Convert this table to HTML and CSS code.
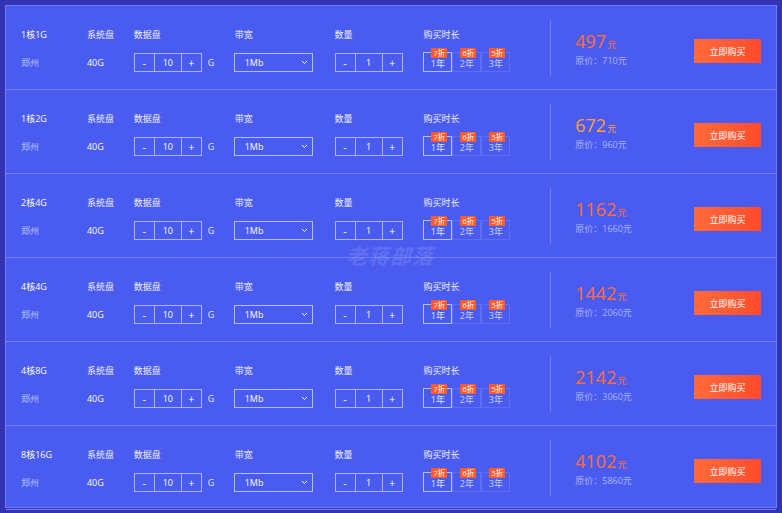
FILE: index.html
```html
<!DOCTYPE html>
<html lang="zh">
<head>
<meta charset="utf-8">
<link rel="stylesheet" href="styles.css">
</head>
<body>
<div class="panel">
  <div class="row">
    <div class="col c-name"><div class="label title">1核1G</div><div class="ctl city">郑州</div></div>
    <div class="col c-sys"><div class="label">系统盘</div><div class="ctl val">40G</div></div>
    <div class="col c-data"><div class="label">数据盘</div><div class="ctl"><div class="stepper"><span class="btn">-</span><span class="num">10</span><span class="btn">+</span></div><span class="unit">G</span></div></div>
    <div class="col c-bw"><div class="label">带宽</div><div class="ctl"><div class="select"><span>1Mb</span><svg width="7" height="5" viewBox="0 0 7 5"><path d="M1 1l2.5 2.5L6 1" fill="none" stroke="#fff" stroke-width="1"/></svg></div></div></div>
    <div class="col c-qty"><div class="label">数量</div><div class="ctl"><div class="stepper"><span class="btn">-</span><span class="num">1</span><span class="btn">+</span></div></div></div>
    <div class="col c-dur"><div class="label">购买时长</div><div class="ctl years"><div class="yr on">1年<i>7折</i></div><div class="yr">2年<i>6折</i></div><div class="yr">3年<i>5折</i></div></div></div>
    <div class="divider"></div>
    <div class="price"><div class="now">497<small>元</small></div><div class="orig">原价：710元</div></div>
    <div class="buy">立即购买</div>
  </div>
  <div class="row">
    <div class="col c-name"><div class="label title">1核2G</div><div class="ctl city">郑州</div></div>
    <div class="col c-sys"><div class="label">系统盘</div><div class="ctl val">40G</div></div>
    <div class="col c-data"><div class="label">数据盘</div><div class="ctl"><div class="stepper"><span class="btn">-</span><span class="num">10</span><span class="btn">+</span></div><span class="unit">G</span></div></div>
    <div class="col c-bw"><div class="label">带宽</div><div class="ctl"><div class="select"><span>1Mb</span><svg width="7" height="5" viewBox="0 0 7 5"><path d="M1 1l2.5 2.5L6 1" fill="none" stroke="#fff" stroke-width="1"/></svg></div></div></div>
    <div class="col c-qty"><div class="label">数量</div><div class="ctl"><div class="stepper"><span class="btn">-</span><span class="num">1</span><span class="btn">+</span></div></div></div>
    <div class="col c-dur"><div class="label">购买时长</div><div class="ctl years"><div class="yr on">1年<i>7折</i></div><div class="yr">2年<i>6折</i></div><div class="yr">3年<i>5折</i></div></div></div>
    <div class="divider"></div>
    <div class="price"><div class="now gold">672<small>元</small></div><div class="orig">原价：960元</div></div>
    <div class="buy">立即购买</div>
  </div>
  <div class="row">
    <div class="col c-name"><div class="label title">2核4G</div><div class="ctl city">郑州</div></div>
    <div class="col c-sys"><div class="label">系统盘</div><div class="ctl val">40G</div></div>
    <div class="col c-data"><div class="label">数据盘</div><div class="ctl"><div class="stepper"><span class="btn">-</span><span class="num">10</span><span class="btn">+</span></div><span class="unit">G</span></div></div>
    <div class="col c-bw"><div class="label">带宽</div><div class="ctl"><div class="select"><span>1Mb</span><svg width="7" height="5" viewBox="0 0 7 5"><path d="M1 1l2.5 2.5L6 1" fill="none" stroke="#fff" stroke-width="1"/></svg></div></div></div>
    <div class="col c-qty"><div class="label">数量</div><div class="ctl"><div class="stepper"><span class="btn">-</span><span class="num">1</span><span class="btn">+</span></div></div></div>
    <div class="col c-dur"><div class="label">购买时长</div><div class="ctl years"><div class="yr on">1年<i>7折</i></div><div class="yr">2年<i>6折</i></div><div class="yr">3年<i>5折</i></div></div></div>
    <div class="divider"></div>
    <div class="price"><div class="now">1162<small>元</small></div><div class="orig">原价：1660元</div></div>
    <div class="buy">立即购买</div>
  </div>
  <div class="row">
    <div class="col c-name"><div class="label title">4核4G</div><div class="ctl city">郑州</div></div>
    <div class="col c-sys"><div class="label">系统盘</div><div class="ctl val">40G</div></div>
    <div class="col c-data"><div class="label">数据盘</div><div class="ctl"><div class="stepper"><span class="btn">-</span><span class="num">10</span><span class="btn">+</span></div><span class="unit">G</span></div></div>
    <div class="col c-bw"><div class="label">带宽</div><div class="ctl"><div class="select"><span>1Mb</span><svg width="7" height="5" viewBox="0 0 7 5"><path d="M1 1l2.5 2.5L6 1" fill="none" stroke="#fff" stroke-width="1"/></svg></div></div></div>
    <div class="col c-qty"><div class="label">数量</div><div class="ctl"><div class="stepper"><span class="btn">-</span><span class="num">1</span><span class="btn">+</span></div></div></div>
    <div class="col c-dur"><div class="label">购买时长</div><div class="ctl years"><div class="yr on">1年<i>7折</i></div><div class="yr">2年<i>6折</i></div><div class="yr">3年<i>5折</i></div></div></div>
    <div class="divider"></div>
    <div class="price"><div class="now">1442<small>元</small></div><div class="orig">原价：2060元</div></div>
    <div class="buy">立即购买</div>
  </div>
  <div class="row">
    <div class="col c-name"><div class="label title">4核8G</div><div class="ctl city">郑州</div></div>
    <div class="col c-sys"><div class="label">系统盘</div><div class="ctl val">40G</div></div>
    <div class="col c-data"><div class="label">数据盘</div><div class="ctl"><div class="stepper"><span class="btn">-</span><span class="num">10</span><span class="btn">+</span></div><span class="unit">G</span></div></div>
    <div class="col c-bw"><div class="label">带宽</div><div class="ctl"><div class="select"><span>1Mb</span><svg width="7" height="5" viewBox="0 0 7 5"><path d="M1 1l2.5 2.5L6 1" fill="none" stroke="#fff" stroke-width="1"/></svg></div></div></div>
    <div class="col c-qty"><div class="label">数量</div><div class="ctl"><div class="stepper"><span class="btn">-</span><span class="num">1</span><span class="btn">+</span></div></div></div>
    <div class="col c-dur"><div class="label">购买时长</div><div class="ctl years"><div class="yr on">1年<i>7折</i></div><div class="yr">2年<i>6折</i></div><div class="yr">3年<i>5折</i></div></div></div>
    <div class="divider"></div>
    <div class="price"><div class="now">2142<small>元</small></div><div class="orig">原价：3060元</div></div>
    <div class="buy">立即购买</div>
  </div>
  <div class="row">
    <div class="col c-name"><div class="label title">8核16G</div><div class="ctl city">郑州</div></div>
    <div class="col c-sys"><div class="label">系统盘</div><div class="ctl val">40G</div></div>
    <div class="col c-data"><div class="label">数据盘</div><div class="ctl"><div class="stepper"><span class="btn">-</span><span class="num">10</span><span class="btn">+</span></div><span class="unit">G</span></div></div>
    <div class="col c-bw"><div class="label">带宽</div><div class="ctl"><div class="select"><span>1Mb</span><svg width="7" height="5" viewBox="0 0 7 5"><path d="M1 1l2.5 2.5L6 1" fill="none" stroke="#fff" stroke-width="1"/></svg></div></div></div>
    <div class="col c-qty"><div class="label">数量</div><div class="ctl"><div class="stepper"><span class="btn">-</span><span class="num">1</span><span class="btn">+</span></div></div></div>
    <div class="col c-dur"><div class="label">购买时长</div><div class="ctl years"><div class="yr on">1年<i>7折</i></div><div class="yr">2年<i>6折</i></div><div class="yr">3年<i>5折</i></div></div></div>
    <div class="divider"></div>
    <div class="price"><div class="now">4102<small>元</small></div><div class="orig">原价：5860元</div></div>
    <div class="buy">立即购买</div>
  </div>
  <div class="watermark">老蒋部落</div>
</div>
</body>
</html>
```

FILE: styles.css
```css
* { box-sizing: border-box; }
html, body { margin: 0; padding: 0; }
body {
  width: 782px;
  height: 513px;
  background: #3334b4;
  padding: 5px;
  font-family: "Open Sans", "Noto Sans CJK SC", sans-serif;
  color: #fff;
  overflow: hidden;
}
.panel {
  position: relative;
  width: 772px;
  height: 503px;
  background: #4a5cf0;
  border: 1px solid #6d7df6;
}
.row {
  display: flex;
  align-items: flex-start;
  height: 84px;
  padding: 22px 15px 0 15px;
  border-bottom: 1px solid #6f80f6;
}
.row:last-of-type { border-bottom: none; height: 82px; }
.col { display: flex; flex-direction: column; }
.label {
  height: 14px;
  line-height: 14px;
  font-size: 9px;
  color: #eef0ff;
  white-space: nowrap;
}
.label.title { color: #fff; }
.ctl {
  margin-top: 10px;
  height: 20px;
  display: flex;
  align-items: center;
  font-size: 9px;
}
.city { color: #b6c1ff; }
.val { color: #fff; }
.c-name { width: 66px; }
.c-sys { width: 47px; }
.c-data { width: 101px; }
.c-bw { width: 100px; }
.c-qty { width: 89px; }
.c-dur { width: 127px; }
.stepper {
  display: flex;
  height: 19px;
  border: 1px solid rgba(255,255,255,0.55);
}
.stepper span {
  display: flex;
  align-items: center;
  justify-content: center;
  font-size: 11px;
  color: #fff;
}
.stepper .btn { width: 19px; }
.stepper .num {
  width: 28px;
  border-left: 1px solid rgba(255,255,255,0.55);
  border-right: 1px solid rgba(255,255,255,0.55);
  font-size: 9px;
}
.unit { margin-left: 6px; color: #e6eaff; }
.select {
  width: 79px;
  height: 19px;
  margin-left: -1px;
  border: 1px solid rgba(255,255,255,0.6);
  display: flex;
  align-items: center;
  justify-content: space-between;
  padding: 0 4px 0 10px;
  font-size: 9px;
}
.years { align-items: stretch; height: 20px; }
.yr {
  position: relative;
  width: 29px;
  height: 20px;
  display: flex;
  align-items: center;
  justify-content: center;
  padding-top: 2px;
  font-size: 9px;
  color: #c6cdff;
  border: 1px solid rgba(255,255,255,0.12);
}
.yr.on { border-color: rgba(255,255,255,0.6); color: #dfe4ff; }
.yr i {
  position: absolute;
  top: -5px;
  right: 4px;
  width: 16px;
  height: 10px;
  background: #ff5a2c;
  color: #fff;
  font-style: normal;
  font-size: 7.5px;
  line-height: 10px;
  text-align: center;
  white-space: nowrap;
}
.divider {
  width: 1px;
  height: 56px;
  margin-top: -8px;
  background: #6f80f6;
}
.price {
  margin-left: 24px;
  width: 119px;
  margin-top: 3px;
}
.now {
  height: 20px;
  font-size: 18px;
  line-height: 20px;
  color: #ff6c3a;
}
.now.gold { color: #ff9b3e; }
.now small { font-size: 9px; line-height: 1; margin-left: 1px; }
.orig {
  margin-top: 3px;
  height: 13px;
  line-height: 13px;
  font-size: 9px;
  color: #a9b4fb;
}
.buy {
  margin-top: 11px;
  width: 67px;
  height: 24px;
  background: linear-gradient(90deg, #ff6b3b, #ff4b2b);
  color: #fff;
  font-size: 9px;
  display: flex;
  align-items: center;
  justify-content: center;
}
.watermark {
  position: absolute;
  left: 340px;
  top: 234px;
  font-size: 21px;
  font-weight: 700;
  font-style: italic;
  color: rgba(255,255,255,0.13);
  letter-spacing: 1px;
}
```
